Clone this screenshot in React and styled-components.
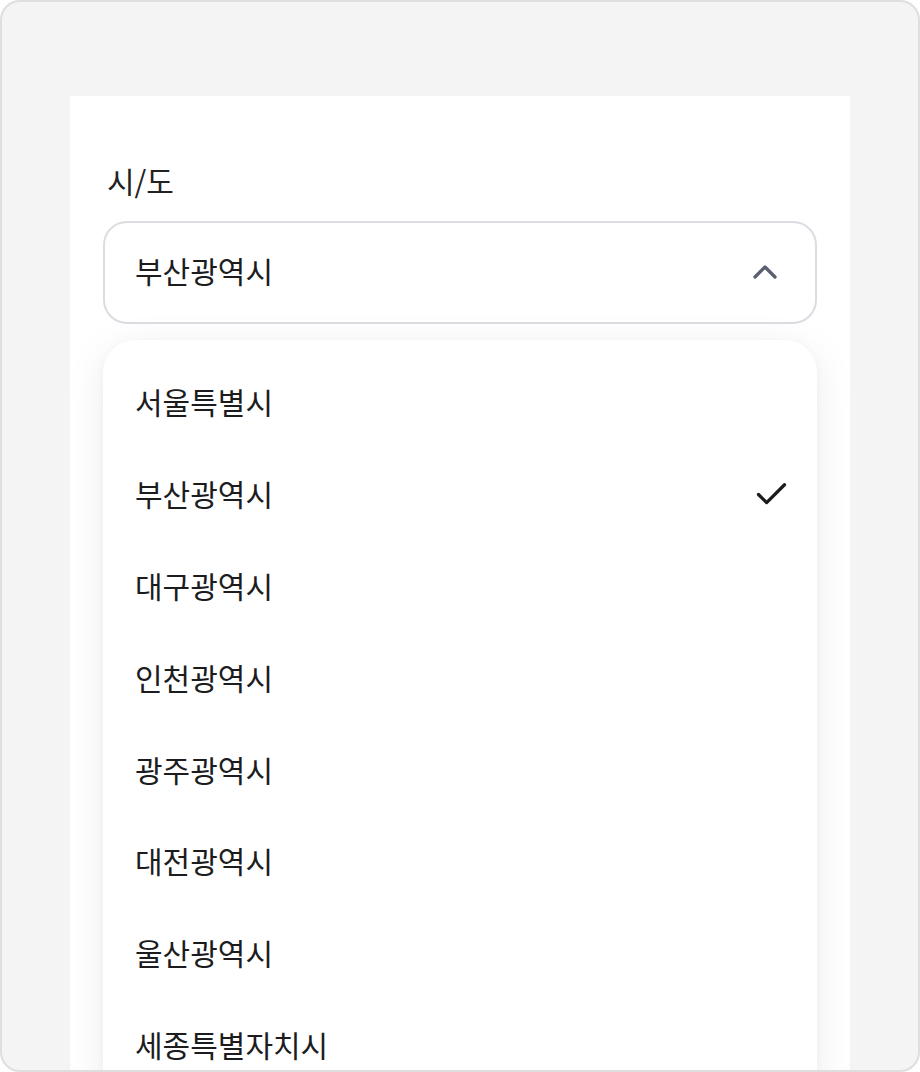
import React from "react";
import styled, { createGlobalStyle } from "styled-components";

const Global = createGlobalStyle`
  html, body { margin: 0; padding: 0; background: #ffffff; }
  body { font-family: "Noto Sans CJK KR", "Noto Sans", sans-serif; }
  * { box-sizing: border-box; }
`;

const Frame = styled.div`
  width: 920px;
  height: 1072px;
  border: 2px solid #dedede;
  border-radius: 20px;
  background: #f4f4f4;
  overflow: hidden;
  padding: 94px 68px 0;
`;

const Panel = styled.div`
  background: #ffffff;
  min-height: 1100px;
  padding: 62px 33px 0;
  display: flex;
  flex-direction: column;
`;

const Label = styled.div`
  font-size: 30px;
  line-height: 44px;
  color: #222222;
  padding-left: 4px;
  margin-bottom: 19px;
`;

const Trigger = styled.div`
  height: 103px;
  border: 2px solid #dcdce2;
  border-radius: 24px;
  display: flex;
  align-items: center;
  justify-content: space-between;
  padding: 0 30px 6px 30px;
  font-size: 30px;
  color: #1c1c1e;
`;

const Menu = styled.div`
  margin-top: 16px;
  background: #ffffff;
  border-radius: 32px;
  box-shadow: 0 8px 40px rgba(0, 0, 0, 0.08), 0 2px 10px rgba(0, 0, 0, 0.03);
  padding: 18px 0 18px;
  display: flex;
  flex-direction: column;
`;

const Item = styled.div`
  height: 91.9px;
  display: flex;
  align-items: center;
  justify-content: space-between;
  padding: 0 26px 6px 32px;
  font-size: 30px;
  color: #1c1c1e;
`;

const Icon = styled.svg`
  width: ${(p) => p.$size}px;
  height: ${(p) => p.$size}px;
  margin-top: 4px;
  fill: none;
  stroke: ${(p) => p.$color};
  stroke-width: 2;
  stroke-linecap: round;
  stroke-linejoin: round;
  flex: none;
`;

const items = [
  "서울특별시",
  "부산광역시",
  "대구광역시",
  "인천광역시",
  "광주광역시",
  "대전광역시",
  "울산광역시",
  "세종특별자치시",
];

export default function App() {
  const selected = "부산광역시";
  return (
    <>
      <Global />
      <Frame>
        <Panel>
          <Label>시/도</Label>
          <Trigger>
            <span>{selected}</span>
            <Icon viewBox="0 0 24 24" $size={40} $color="#596070">
              <path d="m18 15-6-6-6 6" />
            </Icon>
          </Trigger>
          <Menu>
            {items.map((name) => (
              <Item key={name}>
                <span>{name}</span>
                {name === selected && (
                  <Icon viewBox="0 0 24 24" $size={39} $color="#1c1c1e">
                    <path d="M20 6 9 17l-5-5" />
                  </Icon>
                )}
              </Item>
            ))}
          </Menu>
        </Panel>
      </Frame>
    </>
  );
}
